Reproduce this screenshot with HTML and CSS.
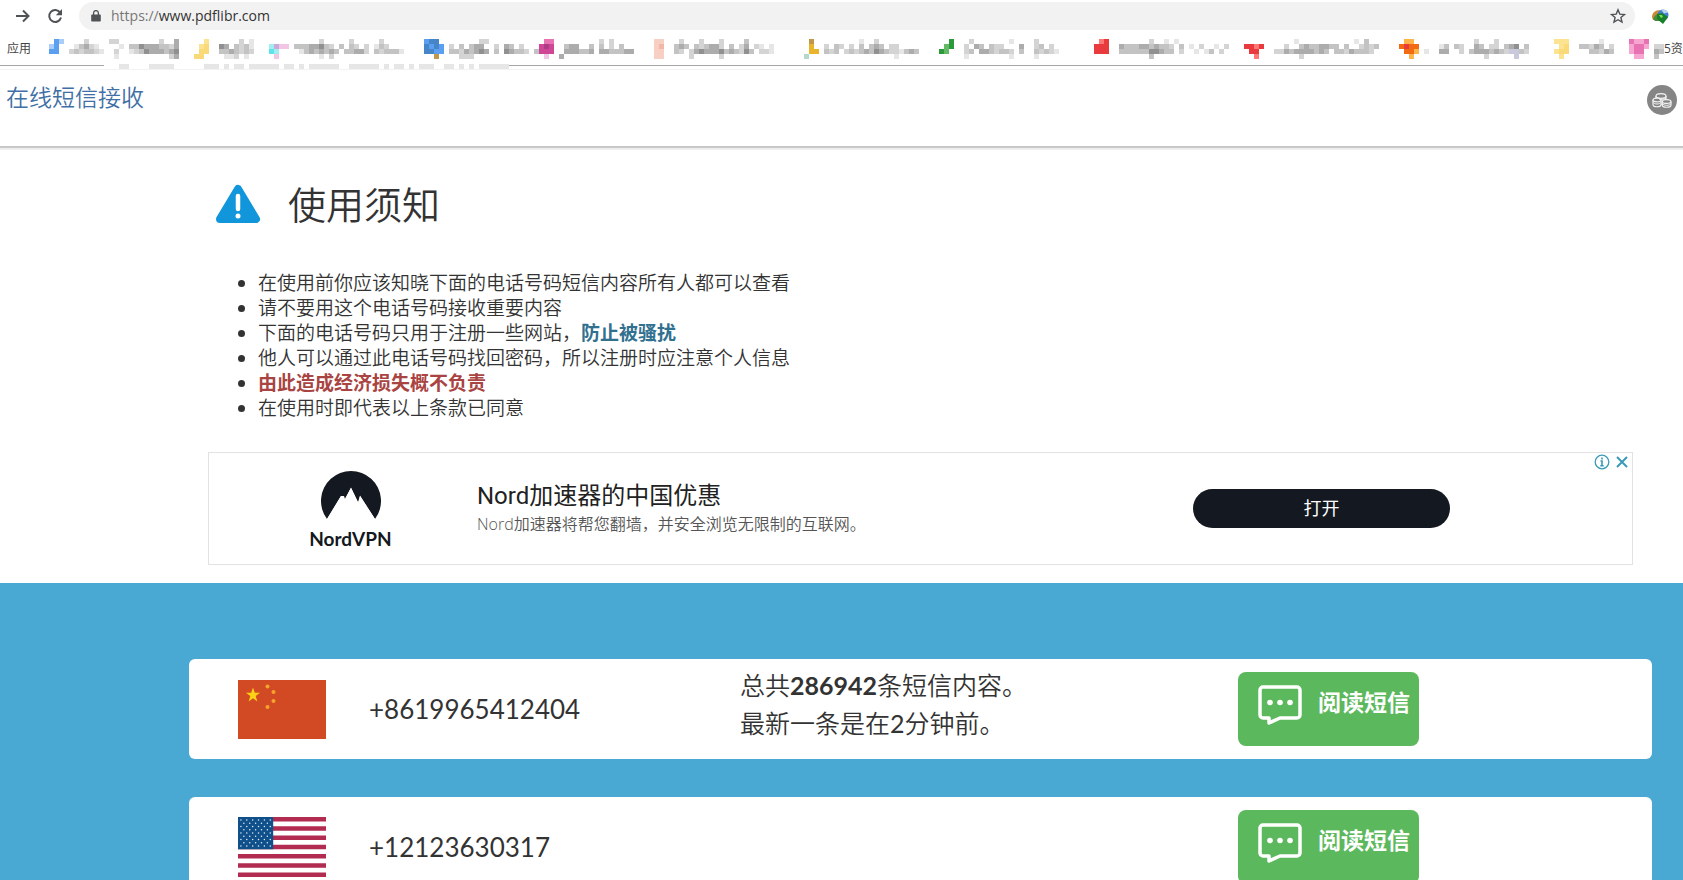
FILE: index.html
```html
<!DOCTYPE html>
<html lang="zh-CN">
<head>
<meta charset="utf-8">
<title>在线短信接收</title>
<link rel="stylesheet" href="styles.css">
</head>
<body>
<div class="window">
  <div class="toolbar">
    <button class="tool" aria-label="前进"><svg width="16" height="16" viewBox="0 0 16 16"><path d="M1 8h12M8 2.5 13.5 8 8 13.5" fill="none" stroke="#505356" stroke-width="2"/></svg></button>
    <button class="tool" aria-label="刷新"><svg width="16" height="16" viewBox="0 0 16 16"><path d="M13.2 4.6A6 6 0 1 0 14 9.6" fill="none" stroke="#505356" stroke-width="2"/><path d="M15 1v6.2H8.8z" fill="#505356"/></svg></button>
    <div class="address">
      <svg width="10" height="12" viewBox="0 0 10 12"><path d="M1 4.5h8a.8.8 0 0 1 .8.8v5.4a.8.8 0 0 1-.8.8H1a.8.8 0 0 1-.8-.8V5.300a.8.8 0 0 1 .8-.8z" fill="#505356"/><path d="M2.600 5V3a2.400 2.400 0 0 1 4.800 0v2" fill="none" stroke="#505356" stroke-width="1.300"/></svg>
      <span class="url"><span class="scheme">https://</span>www.pdflibr.com</span>
      <button class="tool star" aria-label="收藏"><svg width="16" height="16" viewBox="0 0 16 16"><path d="m8 1.800 1.800 4.300 4.700.4-3.600 3 1.100 4.600L8 11.700l-4 2.400 1.100-4.600-3.600-3 4.700-.4z" fill="none" stroke="#505356" stroke-width="1.400"/></svg></button>
    </div>
    <button class="tool" aria-label="扩展"><svg width="18" height="16" viewBox="0 0 18 16"><path d="M1 9C1 5 4 2 9 2l-2 9-5 1z" fill="#c98a3a"/><path d="M2 11c1-3 3-5 6-5l3 7H4z" fill="#4c8b3c"/><circle cx="12" cy="7" r="5.500" fill="#3f7fd0"/><path d="M10 1.500c4-.5 6 1 7 3l-4 1z" fill="#b8d4ee"/><path d="M6 6l5-1 3 2 3 2-5 7-6-5z" fill="#16802a"/><path d="m8 7 3 0 1 2-2 1z" fill="#7ddb5a"/></svg></button>
  </div>
  <nav class="bookmarks" aria-label="书签">
    <a class="apps" href="#">应用</a>
    <div class="marks" id="marks"></div>
    <a class="last" href="#">5资</a>
  </nav>
  <div class="divider"><span class="edge"></span><span id="fringe" class="fringe"></span><span class="edge grow"></span></div>

  <header class="site">
    <a class="brand" href="#">在线短信接收</a>
    <button class="tool" aria-label="工具"><svg width="30" height="30" viewBox="0 0 30 30"><circle cx="15" cy="15" r="15" fill="#858585"/><g fill="#858585" stroke="#f4f4f4" stroke-width="1.200"><path d="M9 11v6c0 3 10 3 10 0v-6"/><ellipse cx="14" cy="11" rx="5" ry="2.300"/><path d="M6 15v4.500c0 3 8 3 8 0V15"/><ellipse cx="10" cy="15" rx="4" ry="1.900"/><path d="M15.300 16.500v3.500c0 3 8.700 3 8.700 0v-3.500"/><ellipse cx="19.600" cy="16.500" rx="4.300" ry="1.900"/><path d="M6.300 17.500c1 2 6.400 2 7.400 0M15.600 18.800c1 2 7.200 2 8.200 0M12 14c2 .6 5 .5 7-.8" fill="none" stroke-width="1"/></g></svg></button>
  </header>

  <section class="notice">
    <h1><svg width="46" height="40" viewBox="0 0 46 40"><path d="M23 5 41 35H5z" fill="#1296db" stroke="#1296db" stroke-width="8" stroke-linejoin="round"/><path d="M23 12v13" stroke="#fff" stroke-width="4.500" stroke-linecap="round"/><circle cx="23" cy="32" r="2.500" fill="#fff"/></svg>使用须知</h1>
    <ul>
      <li>在使用前你应该知晓下面的电话号码短信内容所有人都可以查看</li>
      <li>请不要用这个电话号码接收重要内容</li>
      <li>下面的电话号码只用于注册一些网站，<strong class="info">防止被骚扰</strong></li>
      <li>他人可以通过此电话号码找回密码，所以注册时应注意个人信息</li>
      <li><strong class="danger">由此造成经济损失概不负责</strong></li>
      <li>在使用时即代表以上条款已同意</li>
    </ul>
    <div class="ad">
      <div class="logo">
        <svg width="60" height="48" viewBox="0 0 60 48"><path d="M6 48A30 30 0 1 1 54 48L39 25l-2 6 1 2-8-16-6 11-1-3-3 0z" fill="#141821"/><path d="M20 25 6 48h48L39 24.500l-1.500 8L30 16.500l-6 11.500-.5 4z" fill="#fff"/></svg>
        <span>NordVPN</span>
      </div>
      <div class="pitch">
        <h2>Nord加速器的中国优惠</h2>
        <p>Nord加速器将帮您翻墙，并安全浏览无限制的互联网。</p>
      </div>
      <div class="action"><button class="open">打开</button></div>
      <div class="choices">
        <button class="tool" aria-label="广告信息"><svg width="16" height="16" viewBox="0 0 16 16"><circle cx="8" cy="8" r="6.800" fill="none" stroke="#3b9ab8" stroke-width="1.300"/><path d="M8 3.500v2M6.500 7H8v4.500M6.300 11.800h3.400" fill="none" stroke="#3b9ab8" stroke-width="1.600"/></svg></button>
        <button class="tool" aria-label="关闭广告"><svg width="14" height="16" viewBox="0 0 14 16"><path d="m2 3 10 10M12 3 2 13" stroke="#3b9ab8" stroke-width="2"/></svg></button>
      </div>
    </div>
  </section>

  <main class="numbers">
    <article class="card">
      <svg width="88" height="59" viewBox="0 0 88 59"><path d="M0 0h88v59H0z" fill="#d24a24"/><path d="m15 7.500 1.800 5.300H22l-4.300 3.300 1.600 5.400-4.300-3.200-4.300 3.200 1.600-5.400L8 12.800h5.200z" fill="#fdd116"/><g fill="#f5a32a"><circle cx="29.500" cy="6.500" r="2"/><circle cx="35.500" cy="12" r="2"/><circle cx="35.500" cy="21" r="2"/><circle cx="29.500" cy="27" r="2"/></g></svg>
      <span class="phone">+8619965412404</span>
      <p class="summary">总共<b>286942</b>条短信内容。<br>最新一条是在<span class="count">2</span>分钟前。</p>
      <div><button class="read"><svg width="44" height="40" viewBox="0 0 44 40"><path d="M5 2h34a3 3 0 0 1 3 3v25a3 3 0 0 1-3 3H22l-11 5v-5H5a3 3 0 0 1-3-3V5a3 3 0 0 1 3-3z" fill="none" stroke="#fff" stroke-width="3.500" stroke-linejoin="round"/><g fill="#fff"><circle cx="12" cy="17.500" r="2.800"/><circle cx="22" cy="17.500" r="2.800"/><circle cx="32" cy="17.500" r="2.800"/></g></svg>阅读短信</button></div>
    </article>
    <article class="card">
      <svg width="88" height="60" viewBox="0 0 90 60" preserveAspectRatio="none"><path d="M0 0h90v60H0z" fill="#fff"/><path d="M0 2.300h90M0 11.500h90M0 20.800h90M0 30h90M0 39.200h90M0 48.500h90M0 57.700h90" stroke="#b22c52" stroke-width="4.600"/><path d="M0 0h36v32.300H0z" fill="#0f4f8a"/><g stroke="#dce9f5" stroke-width="1.600" stroke-linecap="round" stroke-dasharray="0 6"><path d="M3 3h32M3 9.500h32M3 16h32M3 22.500h32M3 29h32M6 6.200h27M6 12.700h27M6 19.200h27M6 25.700h27"/></g></svg>
      <span class="phone">+12123630317</span>
      <p class="summary"></p>
      <div><button class="read"><svg width="44" height="40" viewBox="0 0 44 40"><path d="M5 2h34a3 3 0 0 1 3 3v25a3 3 0 0 1-3 3H22l-11 5v-5H5a3 3 0 0 1-3-3V5a3 3 0 0 1 3-3z" fill="none" stroke="#fff" stroke-width="3.500" stroke-linejoin="round"/><g fill="#fff"><circle cx="12" cy="17.500" r="2.800"/><circle cx="22" cy="17.500" r="2.800"/><circle cx="32" cy="17.500" r="2.800"/></g></svg>阅读短信</button></div>
    </article>
  </main>
</div>
<script src="mosaic.js"></script>
</body>
</html>
```
FILE: styles.css
```css
* { box-sizing: border-box; }
body { margin: 0; background: #fff; color: #333; font-family: "Open Sans", "Noto Sans CJK SC", sans-serif; }
.window { height: 100vh; overflow: hidden; }
button { font: inherit; border: 0; cursor: pointer; }
a { text-decoration: none; }
svg { display: block; }
h1, h2, p, ul { margin: 0; }
.tool { padding: 0; background: none; flex: none; }

.toolbar { display: flex; align-items: center; gap: 16px; padding: 2px 14px 0 15px; }
.address { flex: 1; display: flex; align-items: center; gap: 10px; height: 28px; padding: 0 9px 0 12px; border-radius: 14px; background: #f2f2f2; }
.url { flex: 1; font: 14px/20px "Open Sans", sans-serif; color: #333; }
.scheme { color: #777; }

.bookmarks { display: flex; height: 34px; padding: 9px 0 0 7px; overflow: hidden; font-size: 12px; line-height: 20px; white-space: nowrap; }
.bookmarks a { color: #444; }
.apps { flex: none; width: 42px; }
.marks { display: flex; flex: none; }
.marks a { flex: none; }
.last { flex: none; }

.divider { display: flex; height: 5px; }
.edge { width: 104px; height: 1px; margin-top: 1px; background: #a6a6a6; }
.edge.grow { flex: 1; }

.site { display: flex; justify-content: space-between; align-items: flex-start; height: 79px; padding: 15px 6px 0 6px; border-top: 1px solid #f3f3f3; border-bottom: 2px solid #c8c8c8; box-shadow: 0 2px 0 #eee; }
.brand { font-size: 23px; line-height: 24px; font-weight: 350; color: #3f6fa5; }

.notice { padding: 36px 50px 18px 208px; }
.notice h1 { display: flex; align-items: center; gap: 27px; padding-left: 7px; font-size: 38px; line-height: 40px; font-weight: 350; }
.notice ul { margin-top: 47px; padding-left: 50px; font-size: 19px; line-height: 25px; font-weight: 350; }
.notice strong { font-weight: 700; }
.info { color: #31708f; }
.danger { color: #a94442; }

.ad { position: relative; display: grid; grid-template-columns: 268px 1fr 439px; align-items: center; height: 113px; margin-top: 31px; border: 1px solid #e2e2e2; }
.logo { display: flex; flex-direction: column; align-items: center; gap: 8px; padding: 4px 0 0 15px; color: #141821; font: bold 19px/24px Lato, sans-serif; }
.pitch h2 { font: 400 24px/30px Roboto, "Noto Sans CJK SC", sans-serif; color: #222; }
.pitch p { font-size: 16px; line-height: 26px; font-weight: 350; color: #555; }
.open { display: block; width: 257px; height: 39px; padding: 0 0 4px; border-radius: 20px; background: #141821; color: #fff; font-size: 18px; }
.choices { position: absolute; top: 1px; right: 3px; display: flex; gap: 5px; }

.numbers { display: grid; gap: 38px; padding: 76px 31px 76px 189px; background: #4aa9d3; }
.card { display: grid; grid-template-columns: 131fr 371fr 498fr 414fr; align-items: center; height: 100px; padding: 0 0 0 49px; border-radius: 6px; background: #fff; }
.phone { font: 26px/32px Lato, sans-serif; }
.summary { align-self: start; padding-top: 7px; font: 350 25px/38px Lato, "Noto Sans CJK SC", sans-serif; }
.summary b { font-weight: 700; }
.count { font-weight: 400; }
.read { display: flex; gap: 16px; width: 181px; height: 74px; padding: 13px 0 0 20px; border-radius: 8px; background: #5cb85c; color: #fff; font-size: 23px; line-height: 34px; font-weight: 700; white-space: nowrap; }
.read svg { flex: none; }
```
FILE: mosaic.js
```js
// Bookmark entries drawn as 5px mosaic cells: digits are greys, letters are colours.
const CELL = 5;
const COLORS = {
  1: '#e6e6e6', 2: '#d4d4d4', 3: '#c3c3c3', 4: '#acacac', 5: '#909090', 6: '#707070',
  a: '#a8cdf8', b: '#5a9ff0', D: '#4585c8', y: '#fbe38f', Y: '#f9d978', c: '#a0eef0', C: '#5fe3ea',
  p: '#f0c6e4', m: '#c9a8dc', M: '#cf4697', N: '#b03c88', s: '#f8cfc3', S: '#f3b7a8', g: '#e8b52c',
  G: '#c0964a', t: '#b4d8cc', e: '#63bb67', E: '#2c9a3b', r: '#f77', R: '#e93a3e', o: '#ffb44a',
  O: '#f26a11', k: '#f7a6d2', K: '#e873b3', l: '#c9c9de'
};
const marks = [
  [12, ['.ba....2', 'ab...13421', 'bb..2323321', '']],
  [17, ['22........2..4', '..1.3354443324', '.2..1235444345', '.1..........24']],
  [15, ['..y......2.1', '.yY..54.3231', '.YY..3343232', 'YY....112.1']],
  [31, ['..........2.....2.....2', 'cmpp.33344532.3.32.2.132', 'Cc....13434343.33442.323331', '.p........1.2']],
  [23, ['bDD........22', 'DbDb.2.3.344..2.43.2', 'DDbb.33243454.3.54332.3', '..G....222']],
  [23, ['.KK.........2.2', 'MNM..344..3.3.2.3', 'MMM..444334.4433344', '.p..4']],
  [30, ['ss...2...2...2....3', 'sS..343.323442.3.24.21.1', 'ss..32.2454445343253.221', 'ss.....2.....2']],
  [27, ['.G.........1..2', '.g..2.32.2.3.343.22', '.gg.323.232343543221343', 't.................1']],
  [31, ['..E...2.......1....2', '.eE..2.43.322...4..23.2', 'Ee...23.4432332.3..32321', '.....1........1....1']],
  [30, ['.rR........2..1.1', 'RRR..43334434332.3.1.2..1.2', 'RRR..33333355433.2..1.13.2', '...........3']],
  [31, ['..........1...........1.3', 'RRrR....2..34334433.3..2323', '.RR...22434444343.33243332', '..r........2']],
  [31, ['.oo............2...2', 'OROO....13.32..43.22.345.3', '.OOo.1..44..2.34443432ll32', '..o..............2.....l']],
  [15, ['yyy......1', '.yY..33243.2', 'yYY....33243', '.y']],
  [7, ['KkkK', 'kKKk.22', 'kKK..43', '.kk..3']]
];

function mosaic(width, rows) {
  let rects = '';
  rows.forEach((row, y) => [...row].forEach((key, x) => {
    if (COLORS[key]) rects += `<rect x="${x}" y="${y}" width="1" height="1" fill="${COLORS[key]}"/>`;
  }));
  return `<svg width="${width * CELL}" height="${rows.length * CELL}" viewBox="0 0 ${width} ${rows.length}" shape-rendering="crispEdges">${rects}</svg>`;
}

document.getElementById('marks').innerHTML = marks
  .map(([width, rows], i) => `<a href="#" aria-label="书签 ${i + 1}">${mosaic(width, rows)}</a>`)
  .join('');
document.getElementById('fringe').innerHTML = mosaic(81,
  ['...11....11111......111.1.11.111111.11.1.111111..111111.1.11.1.111..11.1.1.111111.1']);
```
